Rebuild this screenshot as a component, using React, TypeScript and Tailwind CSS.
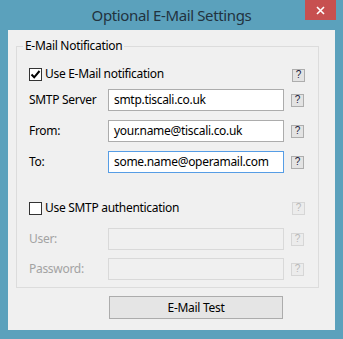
import React from "react";

const font = { fontFamily: '"Noto Sans", "Open Sans", sans-serif' };

function Help({ disabled = false }: { disabled?: boolean }) {
  return (
    <div
      className={`w-[13px] h-[13px] border flex items-center justify-center text-[10px] leading-none tracking-normal ${
        disabled ? "border-[#d6d6d6] bg-[#ececec] text-[#b8b8b8]" : "border-[#adadad] bg-[#e3e3e3] text-[#1a1a3a]"
      }`}
      style={{ fontFamily: '"Liberation Sans", sans-serif' }}
    >
      ?
    </div>
  );
}

function Check({ checked }: { checked: boolean }) {
  return (
    <div className="w-[13px] h-[13px] border border-[#333333] bg-white flex items-center justify-center">
      {checked && (
        <svg width="11" height="11" viewBox="0 0 11 11">
          <path d="M1.5 5.5 L4.2 8.3 L9.5 2" stroke="#000" strokeWidth="2" fill="none" />
        </svg>
      )}
    </div>
  );
}

function FieldRow({
  label,
  value,
  focused = false,
  disabled = false,
  mt,
}: {
  label: string;
  value: string;
  focused?: boolean;
  disabled?: boolean;
  mt: string;
}) {
  return (
    <div className={`flex items-center h-[22px] ${mt}`}>
      <div className={`w-[79px] text-[12px] ${disabled ? "text-[#a3a3a3]" : "text-black"}`}>{label}</div>
      <div
        className={`w-[176px] h-[22px] border flex items-center pl-[5px] text-[12px] text-black ${
          focused
            ? "border-[#569de5] bg-white"
            : disabled
            ? "border-[#d9d9d9] bg-[#f0f0f0]"
            : "border-[#acacac] bg-white"
        }`}
      >
        {value}
      </div>
      <div className="ml-[7px]">
        <Help disabled={disabled} />
      </div>
    </div>
  );
}

export default function App() {
  return (
    <div className="w-[343px] h-[339px] bg-[#5ba1bc] flex flex-col tracking-[-0.3px]" style={font}>
      <div className="h-[30px] relative flex items-center justify-center">
        <span className="text-[15px] tracking-[-0.37px] text-[#22333f]">Optional E-Mail Settings</span>
        <div className="absolute right-[7px] top-0 w-[31px] h-[20px] bg-[#c75050] flex items-center justify-center">
          <svg width="9" height="9" viewBox="0 0 9 9">
            <path d="M1 1 L8 8 M8 1 L1 8" stroke="#fff" strokeWidth="1.6" />
          </svg>
        </div>
      </div>
      <div className="mx-[8px] h-[300px] bg-[#f0f0f0] pl-[8px] pr-[16px] pt-[16px]">
        <div className="relative border border-[#dcdcdc] h-[242px] pl-[12px] pt-[16px]">
          <div className="absolute -top-[9px] left-[6px] px-[2px] bg-[#f0f0f0] text-[12px] leading-[16px] text-black">
            E-Mail Notification
          </div>
          <div className="flex items-center h-[22px]">
            <Check checked />
            <span className="ml-[3px] text-[12px] text-black w-[247px]">Use E-Mail notification</span>
            <div className="mt-[2px]">
              <Help />
            </div>
          </div>
          <FieldRow label="SMTP Server" value="smtp.tiscali.co.uk" mt="mt-[4px]" />
          <FieldRow label="From:" value="your.name@tiscali.co.uk" mt="mt-[9px]" />
          <FieldRow label="To:" value="some.name@operamail.com" focused mt="mt-[9px]" />
          <div className="flex items-center h-[22px] mt-[24px]">
            <Check checked={false} />
            <span className="ml-[3px] text-[12px] text-black w-[247px]">Use SMTP authentication</span>
            <Help disabled />
          </div>
          <FieldRow label="User:" value="" disabled mt="mt-[9px]" />
          <FieldRow label="Password:" value="" disabled mt="mt-[8px]" />
        </div>
        <div className="flex mt-[8px] pl-[93px]">
          <div className="w-[174px] h-[23px] border border-[#acacac] bg-[#e5e5e5] flex items-center justify-center text-[12px] text-black">
            E-Mail Test
          </div>
        </div>
      </div>
    </div>
  );
}
